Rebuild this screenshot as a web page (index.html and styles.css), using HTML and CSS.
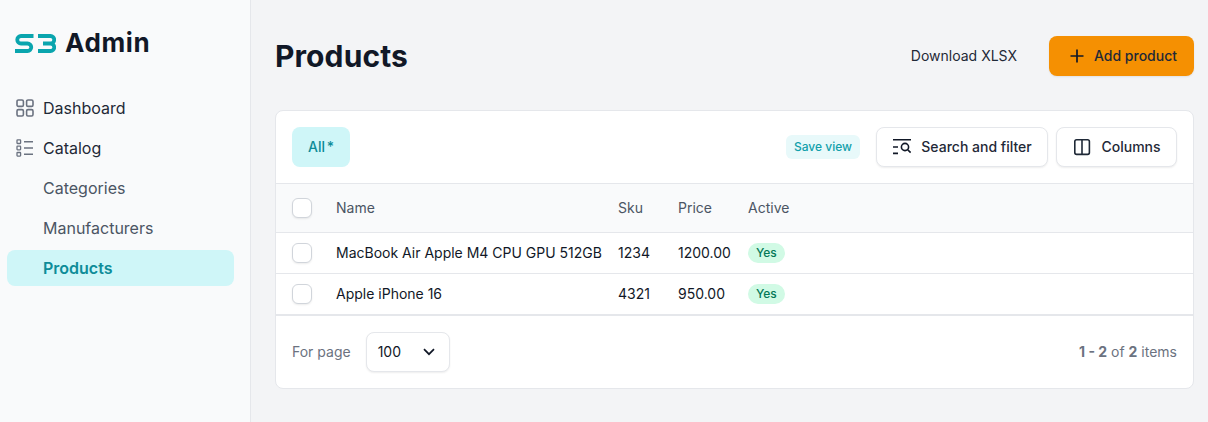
FILE: index.html
```html
<!DOCTYPE html>
<html lang="en">
<head>
<meta charset="utf-8">
<title>Products</title>
<link rel="stylesheet" href="styles.css">
</head>
<body>
<div class="app">
  <aside class="sidebar">
    <div class="brand">
      <svg class="brand-mark" width="41" height="19" viewBox="0 0 41 19" fill="none" stroke="#0aa5ae" stroke-width="3.8">
        <path d="M18.5 2H6a3.75 3.75 0 0 0 0 7.5h6.5a3.75 3.75 0 0 1 0 7.5H0"/>
        <path d="M23 2h12.5a3.75 3.75 0 0 1 0 7.5H28M35.5 9.5a3.75 3.75 0 0 1 0 7.5H23"/>
      </svg>
      <span class="brand-name">Admin</span>
    </div>
    <nav class="nav">
      <a class="nav-item">
        <svg class="nav-icon" width="18" height="18" viewBox="0 0 18 18" fill="none" stroke="#6b7280" stroke-width="1.6">
          <rect x="1" y="1" width="6.4" height="6.4" rx="1.4"/><rect x="10.6" y="1" width="6.4" height="6.4" rx="1.4"/>
          <rect x="1" y="10.6" width="6.4" height="6.4" rx="1.4"/><rect x="10.6" y="10.6" width="6.4" height="6.4" rx="1.4"/>
        </svg>
        Dashboard
      </a>
      <a class="nav-item">
        <svg class="nav-icon" width="18" height="18" viewBox="0 0 18 18" fill="none" stroke="#6b7280">
          <g stroke-width="1.3">
            <rect x="1" y=".9" width="3.6" height="3.6" rx=".5"/><rect x="1" y="7.2" width="3.6" height="3.6" rx=".5"/><rect x="1" y="13.5" width="3.6" height="3.6" rx=".5"/>
          </g>
          <path stroke-width="1.4" d="M8 2.7h9M8 9h9M8 15.3h9"/>
        </svg>
        Catalog
      </a>
      <a class="nav-item sub">Categories</a>
      <a class="nav-item sub">Manufacturers</a>
      <a class="nav-item sub active">Products</a>
    </nav>
  </aside>
  <main class="main">
    <header class="page-head">
      <h1 class="title">Products</h1>
      <div class="head-actions">
        <button class="btn-plain">Download XLSX</button>
        <button class="btn-primary">
          <svg width="14" height="14" viewBox="0 0 14 14" fill="none" stroke="#111827" stroke-width="1.7"><path d="M7 .5v13M.5 7h13"/></svg>
          Add product
        </button>
      </div>
    </header>
    <section class="card">
      <div class="toolbar">
        <button class="tab">All *</button>
        <div class="tools">
          <button class="save-view">Save view</button>
          <button class="btn-white search-btn">
            <svg width="19" height="16" viewBox="0 0 19 16" fill="none" stroke="#111827" stroke-width="1.6">
              <path d="M1 .8h18M1 8h5M1 14.4h5"/>
              <circle cx="13" cy="8" r="3.6"/><path d="M15.7 10.7l2.9 2.9"/>
            </svg>
            Search and filter
          </button>
          <button class="btn-white columns-btn">
            <svg width="18" height="18" viewBox="0 0 18 18" fill="none" stroke="#1f2937" stroke-width="1.6">
              <rect x="1.8" y="1.8" width="14.6" height="14.6" rx="1.8"/><path d="M9 1.8v14.6"/>
            </svg>
            Columns
          </button>
        </div>
      </div>
      <table class="table">
        <thead>
          <tr>
            <th class="col-check"><span class="check"></span></th>
            <th class="col-name">Name</th>
            <th class="col-sku">Sku</th>
            <th class="col-price">Price</th>
            <th>Active</th>
          </tr>
        </thead>
        <tbody>
          <tr>
            <td class="col-check"><span class="check"></span></td>
            <td>MacBook Air Apple M4 CPU GPU 512GB</td>
            <td>1234</td>
            <td>1200.00</td>
            <td><span class="badge">Yes</span></td>
          </tr>
          <tr>
            <td class="col-check"><span class="check"></span></td>
            <td>Apple iPhone 16</td>
            <td>4321</td>
            <td>950.00</td>
            <td><span class="badge">Yes</span></td>
          </tr>
        </tbody>
      </table>
      <footer class="card-foot">
        <div class="per-page">
          <span class="per-label">For page</span>
          <button class="select">
            100
            <svg width="12" height="8" viewBox="0 0 12 8" fill="none" stroke="#111827" stroke-width="1.7"><path d="M1 1.2l5 5 5-5"/></svg>
          </button>
        </div>
        <div class="count"><b>1 - 2</b> of <b>2</b> items</div>
      </footer>
    </section>
  </main>
</div>
</body>
</html>
```
FILE: styles.css
```css
* { box-sizing: border-box; }
html, body { margin: 0; height: 100%; }
body { font-family: Inter, "Liberation Sans", sans-serif; color: #111827; background: #f3f4f6; font-size: 14px; line-height: 20px; }
button { font: inherit; color: inherit; cursor: pointer; }

.app { display: flex; min-height: 422px; }

.sidebar { width: 251px; flex: none; background: #f9fafb; border-right: 1px solid #e5e7eb; padding: 24px 16px 0 7px; }
.brand { display: flex; align-items: center; gap: 9px; height: 37px; padding: 1px 0 0 8px; }
.brand-mark { flex: none; }
.brand-name { font-size: 26px; font-weight: 700; letter-spacing: .6px; color: #111827; line-height: 36px; }

.nav { margin-top: 29px; display: flex; flex-direction: column; gap: 4px; }
.nav-item { display: flex; align-items: center; gap: 9px; height: 36px; padding-left: 9px; font-size: 16px; color: #1f2937; border-radius: 8px; }
.nav-icon { flex: none; }
.nav-item.sub { padding-left: 36px; color: #4b5563; }
.nav-item.active { background: #cff6f8; color: #0e8c98; font-weight: 600; }

.main { flex: 1; padding: 36px 14px 0 24px; min-width: 0; }
.page-head { display: flex; justify-content: space-between; align-items: center; height: 40px; }
.title { margin: 0; font-size: 30px; font-weight: 700; letter-spacing: .1px; line-height: 40px; color: #111827; }
.head-actions { display: flex; align-items: center; gap: 16px; }
.btn-plain { background: none; border: 0; height: 40px; padding: 0 16px; font-weight: 400; color: #1f2937; }
.btn-primary { display: flex; align-items: center; justify-content: center; gap: 10px; width: 145px; height: 40px; border: 0; border-radius: 8px; background: #f59002; font-weight: 500; color: #1f2937; box-shadow: 0 1px 2px rgba(0,0,0,.08); padding: 0 0 0 4px; }

.card { margin-top: 34px; background: #fff; border: 1px solid #e5e7eb; border-radius: 8px; overflow: hidden; }
.toolbar { display: flex; justify-content: space-between; align-items: center; padding: 16px 16px; height: 73px; border-bottom: 1px solid #e5e7eb; }
.tab { width: 58px; height: 40px; border: 0; border-radius: 8px; background: #cff6f8; color: #0e8c98; font-weight: 500; word-spacing: -2px; padding: 0; }
.tools { display: flex; align-items: center; gap: 8px; }
.save-view { height: 24px; padding: 0 8px; border: 0; border-radius: 6px; background: #e8f9fa; color: #12a0ab; font-size: 12px; font-weight: 500; margin-right: 8px; }
.btn-white { display: flex; align-items: center; justify-content: center; height: 40px; background: #fff; border: 1px solid #e5e7eb; border-radius: 8px; box-shadow: 0 1px 2px rgba(0,0,0,.07); font-weight: 500; color: #1f2937; padding: 0; }
.search-btn { width: 172px; gap: 10px; }
.columns-btn { width: 121px; gap: 10px; padding-left: 1px; }

.table { width: 100%; border-collapse: collapse; }
.table th { height: 48px; background: #f9fafb; border-bottom: 1px solid #e5e7eb; font-weight: 400; color: #4b5563; text-align: left; padding: 0 16px 0 0; }
.table td { height: 41px; border-bottom: 1px solid #e5e7eb; padding: 0 16px 0 0; color: #111827; white-space: nowrap; }
.table tbody tr:last-child td { height: 42px; border-bottom-width: 2px; }
.col-check { width: 60px; padding: 0 0 0 16px !important; }
.col-name { width: 282px; }
.col-sku { width: 60px; }
.col-price { width: 70px; }
.check { display: block; width: 20px; height: 20px; background: #fff; border: 1px solid #d1d5db; border-radius: 6px; box-shadow: 0 1px 2px rgba(0,0,0,.08); }
.badge { display: inline-flex; align-items: center; height: 20px; padding: 0 8px; border-radius: 10px; background: #d1fae5; color: #047857; font-size: 12px; font-weight: 500; }

.card-foot { display: flex; justify-content: space-between; align-items: center; height: 72px; padding: 0 16px; }
.per-page { display: flex; align-items: center; gap: 15px; }
.per-label { color: #6b7280; }
.select { display: flex; align-items: center; justify-content: space-between; width: 84px; height: 40px; padding: 0 14px 0 11px; background: #fff; border: 1px solid #e5e7eb; border-radius: 8px; box-shadow: 0 1px 2px rgba(0,0,0,.07); color: #111827; }
.count { color: #6b7280; }
.count b { font-weight: 700; }
```
